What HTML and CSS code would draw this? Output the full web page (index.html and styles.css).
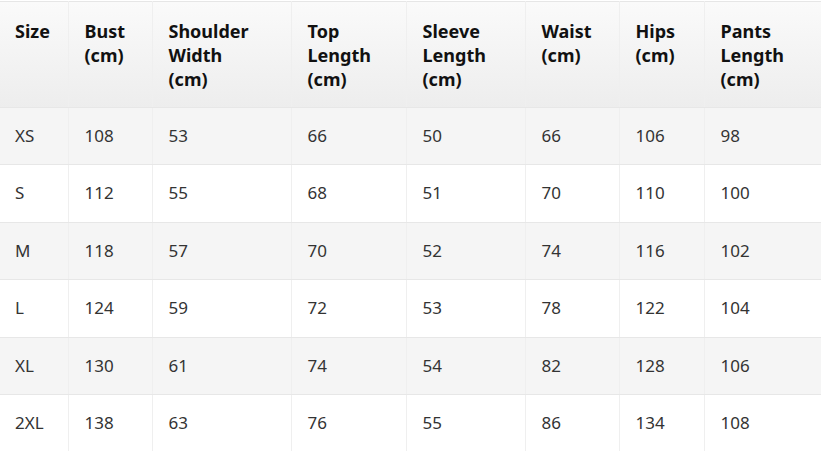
FILE: index.html
```html
<!DOCTYPE html>
<html lang="en">
<head>
<meta charset="utf-8">
<title>Size Chart</title>
<link rel="stylesheet" href="styles.css">
</head>
<body>
<table class="size-table">
  <colgroup>
    <col class="c1"><col class="c2"><col class="c3"><col class="c4"><col class="c5"><col class="c6"><col class="c7"><col class="c8">
  </colgroup>
  <thead>
    <tr>
      <th>Size</th>
      <th>Bust<br>(cm)</th>
      <th>Shoulder<br>Width<br>(cm)</th>
      <th>Top<br>Length<br>(cm)</th>
      <th>Sleeve<br>Length<br>(cm)</th>
      <th>Waist<br>(cm)</th>
      <th>Hips<br>(cm)</th>
      <th>Pants<br>Length<br>(cm)</th>
    </tr>
  </thead>
  <tbody>
    <tr><td>XS</td><td>108</td><td>53</td><td>66</td><td>50</td><td>66</td><td>106</td><td>98</td></tr>
    <tr><td>S</td><td>112</td><td>55</td><td>68</td><td>51</td><td>70</td><td>110</td><td>100</td></tr>
    <tr><td>M</td><td>118</td><td>57</td><td>70</td><td>52</td><td>74</td><td>116</td><td>102</td></tr>
    <tr><td>L</td><td>124</td><td>59</td><td>72</td><td>53</td><td>78</td><td>122</td><td>104</td></tr>
    <tr><td>XL</td><td>130</td><td>61</td><td>74</td><td>54</td><td>82</td><td>128</td><td>106</td></tr>
    <tr><td>2XL</td><td>138</td><td>63</td><td>76</td><td>55</td><td>86</td><td>134</td><td>108</td></tr>
  </tbody>
</table>
</body>
</html>
```
FILE: styles.css
```css
html, body {
  margin: 0;
  padding: 0;
  background: #ffffff;
}

body {
  padding-top: 1px;
  font-family: "Noto Sans", "Open Sans", "Liberation Sans", sans-serif;
  font-size: 17px;
  color: #333333;
}

.size-table {
  border-collapse: collapse;
  table-layout: fixed;
  width: 821px;
  border-top: 1px solid #e6e6e6;
}

.c1 { width: 68px; }
.c2 { width: 84px; }
.c3 { width: 139px; }
.c4 { width: 115px; }
.c5 { width: 119px; }
.c6 { width: 94px; }
.c7 { width: 85px; }
.c8 { width: 117px; }

.size-table th,
.size-table td {
  padding: 16px;
  line-height: 24.5px;
  text-align: left;
  border-left: 1px solid #efefef;
  border-bottom: 1px solid #e7e7e7;
}

.size-table th:first-child,
.size-table td:first-child {
  border-left: none;
  padding-left: 15px;
}

.size-table thead tr {
  background: linear-gradient(to bottom, #fafafa 0%, #ededed 100%);
}

.size-table th {
  font-size: 18px;
  font-weight: 700;
  color: #111111;
  vertical-align: top;
  line-height: 24px;
  padding-top: 17px;
  padding-bottom: 15.5px;
}

.size-table td {
  vertical-align: middle;
  font-weight: 400;
}

.size-table tbody tr:nth-child(odd) {
  background: #f5f5f5;
}

.size-table tbody tr:nth-child(even) {
  background: #ffffff;
}
```
